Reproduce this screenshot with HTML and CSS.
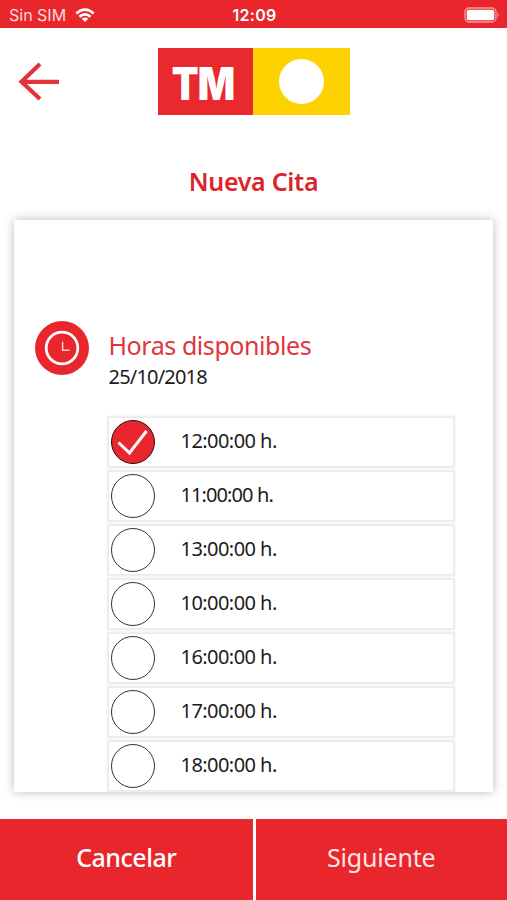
FILE: index.html
```html
<!DOCTYPE html>
<html lang="es">
<head>
<meta charset="utf-8">
<title>Nueva Cita</title>
<link rel="stylesheet" href="styles.css">
</head>
<body>
<div class="status">
  <div class="carrier"><span>Sin SIM</span>
    <svg class="wifi" width="20" height="15" viewBox="0 0 20 15" fill="none" stroke="#fff" stroke-width="2.7"><path d="M1.3 5.5Q10-2.3 18.7 5.5M4.4 8.8Q10 4 15.6 8.8"/><path d="M6.8 10.8Q10 8.2 13.2 10.8L10 14Z" fill="#fff" stroke="none"/></svg>
  </div>
  <div class="clock">12:09</div>
  <svg class="battery" width="37" height="17" viewBox="0 0 37 17"><rect x="1" y="1" width="31" height="14" rx="4" fill="none" stroke="#f59ba0" stroke-width="1.3"/><rect x="2.7" y="2.7" width="27.6" height="10.6" rx="2" fill="#fff"/><path d="M33.6 5.3Q36 8 33.6 10.7Z" fill="#f59ba0"/></svg>
</div>
<header class="header">
  <svg class="back" width="44" height="42" viewBox="0 0 44 42" fill="none" stroke="#e5333b" stroke-width="4.2"><path d="M23 3 4.5 20.8 23 38M4.5 20.8H42"/></svg>
  <div class="logo"><div class="logo-red"><span>TM</span></div><div class="logo-yellow"><i></i></div></div>
</header>
<h1 class="title">Nueva Cita</h1>
<main class="card">
  <div class="intro">
    <svg class="hours" width="54" height="54" viewBox="0 0 54 54" fill="none" stroke="#fff"><circle cx="27" cy="27" r="27" fill="#e8262b" stroke="none"/><circle cx="27" cy="27" r="15.8" stroke-width="2.8"/><path d="M27.6 20.8V29.2H34.5" stroke="#ffd0d0" stroke-width="1.5"/></svg>
    <div><h2 class="subtitle">Horas disponibles</h2><div class="date">25/10/2018</div></div>
  </div>
  <ul class="slots">
    <li class="slot"><span class="radio checked"><svg width="44" height="44" viewBox="0 0 44 44"><path d="M7.5 22.5 18.5 33 35.5 11" fill="none" stroke="#fff" stroke-width="3"/></svg></span><span>12:00:00 h.</span></li>
    <li class="slot"><span class="radio"></span><span class="narrow">11:00:00 h.</span></li>
    <li class="slot"><span class="radio"></span><span>13:00:00 h.</span></li>
    <li class="slot"><span class="radio"></span><span>10:00:00 h.</span></li>
    <li class="slot"><span class="radio"></span><span>16:00:00 h.</span></li>
    <li class="slot"><span class="radio"></span><span>17:00:00 h.</span></li>
    <li class="slot"><span class="radio"></span><span>18:00:00 h.</span></li>
  </ul>
</main>
<footer class="actions"><button class="cancel"><span>Cancelar</span></button><button class="next"><span>Siguiente</span></button></footer>
</body>
</html>
```
FILE: styles.css
```css
* { box-sizing: border-box; }
body { margin: 0; height: 900px; overflow: hidden; display: flex; flex-direction: column; background: #fff; font-family: "Noto Sans", sans-serif; color: #1c1c1c; }
.status { height: 28px; flex: none; display: grid; grid-template-columns: 1fr auto 1fr; align-items: center; padding: 2px 6px 0 9px; background: #e8262b; color: #fff; font-family: Inter, sans-serif; }
.carrier { display: flex; align-items: center; gap: 9px; font-size: 16px; color: #ffd9da; }
.clock { font-size: 16px; font-weight: 600; letter-spacing: 0.3px; padding-right: 1px; }
.battery { justify-self: end; }
.header { height: 88px; flex: none; display: flex; padding: 20px 0 0 17px; }
.back { margin-top: 13px; flex: none; }
.logo { display: flex; width: 192px; height: 67px; margin-left: 97px; }
.logo-red, .logo-yellow { display: flex; align-items: center; justify-content: center; }
.logo-red { width: 95px; background: #e8292e; color: #fff; font: 900 45px/67px Inter, sans-serif; letter-spacing: -1px; padding: 4px 6px 0 0; }
.logo-red span { transform: scaleX(.87); }
.logo-yellow { width: 97px; background: #fed100; }
.logo-yellow i { width: 45px; height: 45px; border-radius: 50%; background: #fff; }
.title { margin: 47px 0 0; height: 57px; text-align: center; font-size: 25px; line-height: 36px; font-weight: 600; letter-spacing: -0.3px; color: #db252b; }
.card { width: 479px; height: 572px; flex: none; margin-left: 14px; padding: 101px 40px 0 20.5px; box-shadow: 0 0 10px rgba(0,0,0,.27); overflow: hidden; }
.intro { display: flex; gap: 20px; height: 97px; }
.subtitle { margin: 6px 0 0; font-size: 25px; line-height: 36px; font-weight: 400; letter-spacing: -0.43px; color: #e0363c; white-space: nowrap; }
.date { font-size: 20px; line-height: 27px; letter-spacing: -0.8px; }
.slots { list-style: none; margin: 0 0 0 74px; padding: 0; display: grid; gap: 6px; }
.slot { height: 48px; display: flex; align-items: center; padding: 0 0 0 2px; gap: 26px; font-size: 20px; letter-spacing: -0.55px; line-height: 48px; box-shadow: 0 0 2px 2px rgba(0,0,0,.09); background: #fff; }
.slot > span:last-child { margin-top: -3px; }
.slot .narrow { letter-spacing: -0.9px; }
.radio { width: 44px; height: 44px; border: 1.5px solid #333; border-radius: 50%; margin-top: 0; flex: none; }
.radio svg { display: block; margin: -1px; }
.checked { background: #e8262b; border-color: #310b0d; }
.actions { margin-top: auto; flex: none; height: 81px; display: grid; grid-template-columns: 252.5px 1fr; gap: 3px; }
.actions button { border: 0; padding: 0 0 5px; background: #e8262b; color: #fff; font: 500 25px/36px "Noto Sans", sans-serif; letter-spacing: -0.5px; }
.actions .next { font-weight: 400; letter-spacing: -0.2px; color: #ffe4e4; }
```
